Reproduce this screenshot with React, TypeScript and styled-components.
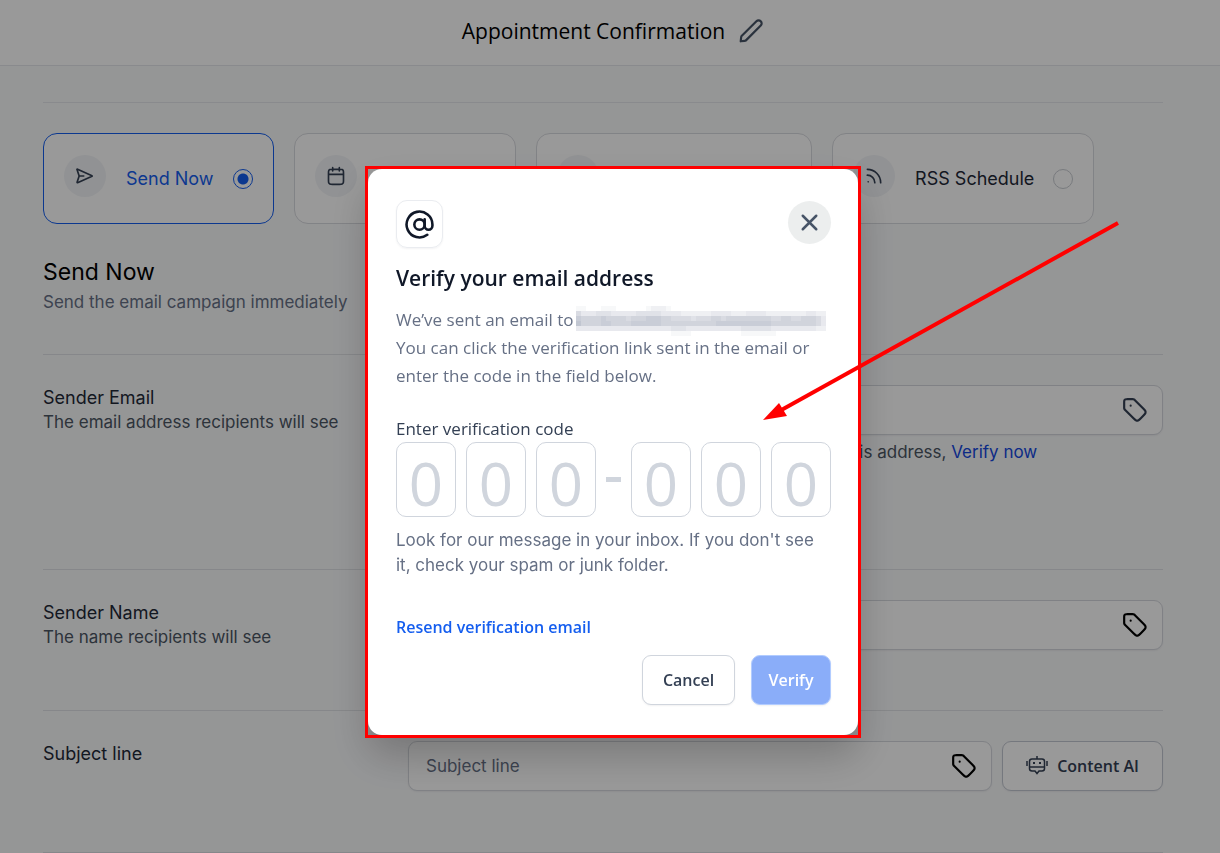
import React from 'react';
import styled, { createGlobalStyle, css } from 'styled-components';

const inter = "Inter, 'Liberation Sans', sans-serif";
const segoe = "'Segoe UI', 'Open Sans', 'Noto Sans', sans-serif";

const GlobalStyle = createGlobalStyle`
  *, *::before, *::after { box-sizing: border-box; }
  body { margin: 0; background: #f9fafb; font-family: ${inter}; font-size: 17px; line-height: 25px; color: #1f2937; overflow: hidden; }
  h1, h2, h3, p, fieldset { margin: 0; padding: 0; border: 0; font-weight: 400; }
  button, input { font: inherit; color: inherit; }
  svg { display: block; }
`;

const Header = styled.header`
  display: flex;
  align-items: center;
  justify-content: center;
  gap: 13px;
  height: 66px;
  padding: 0 0 4px 6px;
  background: #fff;
  border-bottom: 1px solid #e5e7eb;
`;

const PageTitle = styled.h1`
  font-family: ${segoe};
  font-size: 21px;
  line-height: 30px;
  color: #000;
`;

const PlainButton = styled.button`
  padding: 0;
  border: 0;
  background: none;
  color: #475467;
`;

const Content = styled.main`
  padding: 36px 57px 0 43px;
`;

const Options = styled.fieldset`
  display: flex;
  gap: 20px;
  padding-top: 30px;
  border-top: 1px solid #e5e7eb;
`;

const OptionCard = styled.label<{ $active?: boolean }>`
  display: flex;
  align-items: center;
  height: 91px;
  padding: 0 20px;
  border: 1px solid ${p => (p.$active ? '#155eef' : '#d8dadf')};
  border-radius: 14px;
  background: #fff;
  color: ${p => (p.$active ? '#155eef' : '#1f2937')};
  font-size: 18px;
  white-space: nowrap;
`;

const OptionIcon = styled.span`
  display: flex;
  align-items: center;
  justify-content: center;
  width: 42px;
  height: 42px;
  margin: 0 20px 6px 0;
  border-radius: 50%;
  background: #f2f4f7;
  color: #344054;
`;

const Radio = styled.input`
  appearance: none;
  width: 20px;
  height: 20px;
  margin: 0 0 0 19px;
  border: 1px solid #c9ccd2;
  border-radius: 50%;
  &:checked {
    border-color: #155eef;
    background: radial-gradient(circle, #155eef 5px, transparent 6px);
  }
`;

const Intro = styled.section`
  padding: 33px 0 37px;
`;

const IntroTitle = styled.h2`
  font-size: 23px;
  line-height: 30px;
  color: #000;
`;

const IntroText = styled.p`
  line-height: 30px;
  color: #667085;
`;

const FormRow = styled.section<{ $height: number }>`
  display: grid;
  grid-template-columns: 365px minmax(0, 1fr);
  min-height: ${p => p.$height}px;
  padding-top: 30px;
  border-top: 1px solid #e0e2e6;
`;

const Divider = styled.hr`
  margin: 0;
  border: 0;
  border-top: 1px solid #e0e2e6;
`;

const RowLabel = styled.label`
  display: block;
  font-size: 18px;
  color: #1f2937;
`;

const RowHint = styled.p`
  color: #4b5563;
`;

const FieldLine = styled.div`
  display: flex;
  gap: 10px;
`;

const boxed = css`
  height: 50px;
  border: 1px solid #d5d8de;
  border-radius: 9px;
  background: #fff;
  box-shadow: 0 1px 2px rgba(16, 24, 40, 0.06);
`;

const Field = styled.div`
  ${boxed}
  flex: 1;
  display: flex;
  align-items: center;
  padding: 0 14px 0 17px;
`;

const TextInput = styled.input`
  flex: 1;
  min-width: 0;
  padding: 0;
  border: 0;
  outline: 0;
  background: none;
  &::placeholder { color: #667085; opacity: 1; }
`;

const TagButton = styled(PlainButton)<{ $muted?: boolean }>`
  color: ${p => (p.$muted ? '#344054' : '#000')};
`;

const AiButton = styled.button`
  ${boxed}
  display: flex;
  align-items: center;
  justify-content: center;
  gap: 9px;
  width: 161px;
  padding: 0;
  border-color: #c4c9d2;
  font-family: ${segoe};
  font-size: 16px;
  font-weight: 600;
  color: #344054;
`;

const FieldNote = styled.p`
  padding-top: 5px;
  color: #4b5563;
`;

const NoteLink = styled.a`
  color: #1549e0;
  text-decoration: none;
`;

const Overlay = styled.div`
  position: fixed;
  inset: 0;
  display: flex;
  justify-content: center;
  align-items: flex-start;
  padding: 166px 0 0 6px;
  background: rgba(0, 0, 0, 0.4);
`;

const Highlight = styled.div`
  position: relative;
  width: 496px;
  padding: 3px;
  &::after {
    content: '';
    position: absolute;
    inset: 0;
    border: 3px solid #f00;
    pointer-events: none;
  }
`;

const Dialog = styled.div`
  padding: 31px 27px 30px 28px;
  border-radius: 14px;
  background: #fff;
  font-family: ${segoe};
  box-shadow: 0 20px 40px rgba(0, 0, 0, 0.22);
`;

const DialogTop = styled.div`
  display: flex;
  justify-content: space-between;
  align-items: flex-start;
`;

const AtBadge = styled.span`
  display: flex;
  align-items: center;
  justify-content: center;
  width: 47px;
  height: 48px;
  border: 1px solid #eaecf0;
  border-radius: 11px;
  color: #101828;
  box-shadow: 0 1px 2px rgba(16, 24, 40, 0.05);
`;

const CloseButton = styled(PlainButton)`
  display: flex;
  align-items: center;
  justify-content: center;
  width: 43px;
  height: 43px;
  margin-top: 1px;
  border-radius: 50%;
  background: #eceeee;
`;

const DialogTitle = styled.h2`
  padding-top: 15px;
  font-size: 21px;
  font-weight: 600;
  line-height: 30px;
  color: #101828;
`;

const DialogText = styled.p`
  padding-top: 13px;
  line-height: 28px;
  color: #667085;
  white-space: nowrap;
`;

const Mosaic = styled.svg`
  display: inline-block;
  vertical-align: middle;
  margin: -2px 0 -2px 3px;
`;

const CodeLabel = styled.label`
  display: block;
  padding-top: 26px;
  color: #344054;
`;

const CodeRow = styled.div`
  display: flex;
  align-items: center;
  gap: 10px;
  padding-top: 1px;
`;

const CodeInput = styled.input`
  width: 60px;
  height: 75px;
  padding: 6px 0 0;
  border: 1px solid #d0d5dd;
  border-radius: 10px;
  background: #fff;
  font-size: 60px;
  line-height: 60px;
  text-align: center;
  &::placeholder { color: #d0d5dd; opacity: 1; }
`;

const Dash = styled.span`
  width: 15px;
  height: 5px;
  background: #d0d5dd;
`;

const CodeHint = styled.p`
  padding-top: 11px;
  font-family: ${inter};
  color: #667085;
`;

const Resend = styled.a`
  display: inline-block;
  padding-top: 37px;
  font-size: 16px;
  font-weight: 600;
  color: #155eef;
  text-decoration: none;
`;

const Actions = styled.div`
  display: flex;
  justify-content: flex-end;
  gap: 16px;
  padding-top: 15px;
`;

const ActionButton = styled.button<{ $primary?: boolean }>`
  width: ${p => (p.$primary ? 80 : 93)}px;
  height: 50px;
  padding: 0;
  border: 1px solid ${p => (p.$primary ? '#b2ccff' : '#d0d5dd')};
  border-radius: 9px;
  background: ${p => (p.$primary ? '#8aadf9' : '#fff')};
  color: ${p => (p.$primary ? '#fff' : '#344054')};
  font-size: 16px;
  font-weight: 600;
  box-shadow: 0 1px 2px rgba(16, 24, 40, 0.06);
`;

const Arrow = styled.svg`
  position: absolute;
  left: 397px;
  top: 54px;
  z-index: 1;
  pointer-events: none;
`;

const Icon = ({ size, width = 2, children }: { size: number; width?: number; children: React.ReactNode }) => (
  <svg width={size} height={size} viewBox="0 0 24 24" fill="none" stroke="currentColor" strokeWidth={width} strokeLinecap="round" strokeLinejoin="round" aria-hidden="true">
    {children}
  </svg>
);

const TagIcon = () => (
  <Icon size={26}>
    <path d="M8 8h.01M2 5.2v4.475c0 .489 0 .733.055.963.05.204.13.4.24.579.123.201.296.374.642.72l7.669 7.669c1.188 1.188 1.782 1.782 2.467 2.004a3 3 0 0 0 1.854 0c.685-.222 1.28-.816 2.467-2.004l2.212-2.212c1.188-1.188 1.782-1.782 2.004-2.467a3 3 0 0 0 0-1.854c-.222-.685-.816-1.28-2.004-2.467l-7.669-7.669c-.346-.346-.519-.519-.72-.642a2 2 0 0 0-.579-.24C10.409 2 10.165 2 9.676 2H5.2c-1.12 0-1.68 0-2.108.218a2 2 0 0 0-.874.874C2 3.52 2 4.08 2 5.2Z" />
  </Icon>
);

const BotIcon = () => (
  <svg width="22" height="22" viewBox="0 0 22 22" fill="none" stroke="currentColor" strokeWidth="1.5" aria-hidden="true">
    <path d="M11 1v3M6 4h10a2.500 2.500 0 0 1 2.500 2.500v7A2.500 2.500 0 0 1 16 16h-3l-2 2.500L9 16H6a2.500 2.500 0 0 1-2.500-2.500v-7A2.500 2.500 0 0 1 6 4ZM3.500 12h15M1 6v5M21 6v5" />
    <path d="M7 8h2M13 8h2" strokeWidth="2" />
  </svg>
);

const icons = {
  send: <path d="M10.500 12H5M4.900 12.300 2.700 18.900c-.17.52-.26.78-.2.940a.5.5 0 0 0 .34.300c.16.05.41-.07.91-.29l16-7.200c.49-.22.730-.33.810-.48a.5.5 0 0 0 0-.4c-.08-.15-.32-.26-.81-.48l-16-7.200c-.49-.22-.740-.33-.900-.29a.5.5 0 0 0-.35.300c-.6.160.3.420.2.940l2.200 6.700" />,
  calendar: <path d="M21 10H3M16 2v4M8 2v4M7.800 22h8.400c1.680 0 2.520 0 3.162-.327a3 3 0 0 0 1.311-1.311C21 19.720 21 18.880 21 17.200V8.800c0-1.680 0-2.520-.327-3.162a3 3 0 0 0-1.311-1.311C18.720 4 17.880 4 16.200 4H7.800c-1.680 0-2.520 0-3.162.327a3 3 0 0 0-1.311 1.311C3 6.280 3 7.120 3 8.800v8.400c0 1.680 0 2.520.327 3.162a3 3 0 0 0 1.311 1.311C5.280 22 6.120 22 7.800 22Z" />,
  rss: <path d="M4 11a9 9 0 0 1 9 9M4 4a16 16 0 0 1 16 16M5 19h.01" />,
};

const options: { label: string; icon: keyof typeof icons }[] = [
  { label: 'Send Now', icon: 'send' },
  { label: 'Schedule', icon: 'calendar' },
  { label: 'Batch Schedule', icon: 'calendar' },
  { label: 'RSS Schedule', icon: 'rss' },
];

// Each string is one row of 5px cells; a digit is the darkness of its cell.
const mosaicRows = [
  '11000111000000122210000000000000000000000000000000',
  '53334443333344444333322222233332223333222222223322',
  '76666766665666777665555455566566666666655665566653',
  '86666776666777777666666666667777777777766666666653',
  '33333333333333333334443333333333344444433333333322',
  '00000000000000000001111000000000011111110000000000',
];

const RedactedEmail = () => (
  <Mosaic width="255" height="30" shapeRendering="crispEdges" fill="#6b7590" role="img" aria-label="Hidden email address">
    {mosaicRows.map((row, y) =>
      [...row].map((cell, x) => <rect key={`${x}-${y}`} x={x * 5} y={y * 5} width="5" height="5" opacity={Number(cell) * 0.052} />),
    )}
  </Mosaic>
);

const CodeGroup = ({ from }: { from: number }) => (
  <>
    {[0, 1, 2].map(n => (
      <CodeInput key={n} id={`code-${from + n}`} aria-label={`Digit ${from + n}`} placeholder="0" maxLength={1} inputMode="numeric" />
    ))}
  </>
);

export default function App() {
  return (
    <>
      <GlobalStyle />
      <Header>
        <PageTitle>Appointment Confirmation</PageTitle>
        <PlainButton aria-label="Rename">
          <Icon size={26}>
            <path d="M2.876 18.116c.046-.414.069-.62.131-.814.056-.171.134-.334.234-.485.111-.17.258-.317.553-.611L17 3a2.828 2.828 0 1 1 4 4L7.794 20.206c-.295.295-.442.442-.611.553a2 2 0 0 1-.485.234c-.194.062-.4.085-.814.131L2.500 21.500l.376-3.384Z" />
          </Icon>
        </PlainButton>
      </Header>
      <Content>
        <Options>
          {options.map((o, i) => (
            <OptionCard key={o.label} $active={i === 0}>
              <OptionIcon><Icon size={20}>{icons[o.icon]}</Icon></OptionIcon>
              {o.label}
              <Radio type="radio" name="when" defaultChecked={i === 0} />
            </OptionCard>
          ))}
        </Options>
        <Intro>
          <IntroTitle>Send Now</IntroTitle>
          <IntroText>Send the email campaign immediately</IntroText>
        </Intro>
        <FormRow $height={215}>
          <div>
            <RowLabel htmlFor="email">Sender Email</RowLabel>
            <RowHint>The email address recipients will see</RowHint>
          </div>
          <div>
            <Field>
              <TextInput id="email" />
              <TagButton $muted aria-label="Insert tag"><TagIcon /></TagButton>
            </Field>
            <FieldNote>To send your email campaigns, you will need to verify this address, <NoteLink href="#verify">Verify now</NoteLink></FieldNote>
          </div>
        </FormRow>
        <FormRow $height={141}>
          <div>
            <RowLabel htmlFor="name">Sender Name</RowLabel>
            <RowHint>The name recipients will see</RowHint>
          </div>
          <FieldLine>
            <Field>
              <TextInput id="name" />
              <TagButton aria-label="Insert tag"><TagIcon /></TagButton>
            </Field>
          </FieldLine>
        </FormRow>
        <FormRow $height={142}>
          <RowLabel htmlFor="subject">Subject line</RowLabel>
          <FieldLine>
            <Field>
              <TextInput id="subject" placeholder="Subject line" />
              <TagButton aria-label="Insert tag"><TagIcon /></TagButton>
            </Field>
            <AiButton><BotIcon />Content AI</AiButton>
          </FieldLine>
        </FormRow>
        <Divider />
      </Content>
      <Overlay>
        <Highlight>
          <Dialog role="dialog" aria-modal="true" aria-labelledby="dialog-title">
            <DialogTop>
              <AtBadge>
                <Icon size={31}>
                  <path d="M16 8v5a3 3 0 0 0 6 0v-1a10 10 0 1 0-4 8" />
                  <circle cx="12" cy="12" r="4" />
                </Icon>
              </AtBadge>
              <CloseButton aria-label="Close">
                <Icon size={27} width={2.2}><path d="M18 6 6 18M6 6l12 12" /></Icon>
              </CloseButton>
            </DialogTop>
            <DialogTitle id="dialog-title">Verify your email address</DialogTitle>
            <DialogText>
              We’ve sent an email to<RedactedEmail /><br />
              You can click the verification link sent in the email or<br />
              enter the code in the field below.
            </DialogText>
            <CodeLabel htmlFor="code-1">Enter verification code</CodeLabel>
            <CodeRow>
              <CodeGroup from={1} />
              <Dash />
              <CodeGroup from={4} />
            </CodeRow>
            <CodeHint>Look for our message in your inbox. If you don't see it, check your spam or junk folder.</CodeHint>
            <Resend href="#resend">Resend verification email</Resend>
            <Actions>
              <ActionButton>Cancel</ActionButton>
              <ActionButton $primary>Verify</ActionButton>
            </Actions>
          </Dialog>
          <Arrow width="358" height="202" viewBox="0 0 358 202" fill="#f00" aria-hidden="true">
            <path d="M356 3 14 193" stroke="#f00" strokeWidth="4" />
            <path d="M1 200 17 183 25 196Z" />
          </Arrow>
        </Highlight>
      </Overlay>
    </>
  );
}
